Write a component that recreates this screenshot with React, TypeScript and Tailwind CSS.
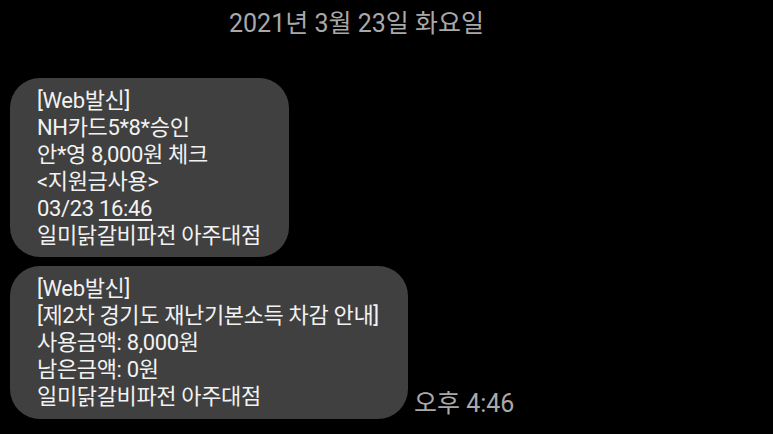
import React from "react";

const font = { fontFamily: "Roboto, 'Noto Sans CJK KR', sans-serif" };

export default function App() {
  return (
    <div
      className="w-[773px] h-[434px] bg-black overflow-hidden flex flex-col"
      style={font}
    >
      <div className="h-[46px] flex items-center justify-center pr-[60px] pt-[2px] text-[25px] text-[#a9a9a9]">
        2021년 3월 23일 화요일
      </div>
      <div className="flex flex-col gap-[9px] pl-[10px] pt-[32px]">
        <div className="self-start w-[279px] rounded-[30px] bg-[#404040] pl-[27px] pt-[9px] pb-[8px] text-[22px] leading-[27px] tracking-[-0.35px] text-[#f2f2f2]">
          <div>[Web발신]</div>
          <div>NH카드5*8*승인</div>
          <div>안*영 8,000원 체크</div>
          <div>&lt;지원금사용&gt;</div>
          <div>
            03/23 <span className="underline underline-offset-[3px]">16:46</span>
          </div>
          <div>일미닭갈비파전 아주대점</div>
        </div>
        <div className="flex items-end gap-[6px]">
          <div className="w-[398px] rounded-[30px] bg-[#404040] pl-[27px] pt-[9px] pb-[9px] text-[22px] leading-[27px] tracking-[-0.35px] text-[#f2f2f2]">
            <div>[Web발신]</div>
            <div>[제2차 경기도 재난기본소득 차감 안내]</div>
            <div>사용금액: 8,000원</div>
            <div>남은금액: 0원</div>
            <div>일미닭갈비파전 아주대점</div>
          </div>
          <div className="text-[25px] leading-[30px] text-[#a9a9a9] mb-[0px]">오후 4:46</div>
        </div>
      </div>
    </div>
  );
}
